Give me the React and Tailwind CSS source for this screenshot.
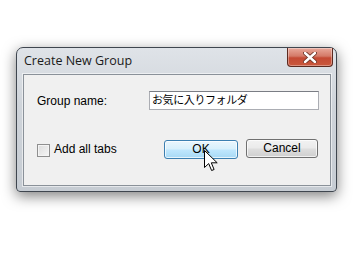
import React from "react";

const uiFont = { fontFamily: '"Liberation Sans", Arial, sans-serif' };

function CloseButton() {
  return (
    <div className="mr-[3px] flex h-[19px] w-[46px] items-center justify-center rounded-b-[4px] border border-t-0 border-[#5c2a20] bg-[linear-gradient(to_bottom,#e9a99b_0%,#d47a68_45%,#c44a34_55%,#c9583d_100%)] shadow-[inset_0_0_0_1px_rgba(255,255,255,0.35)]">
      <svg width="14" height="11" viewBox="0 0 14 11">
        <path
          d="M2 1 L12 10 M12 1 L2 10"
          stroke="#6b3326"
          strokeWidth="4.2"
          strokeLinecap="round"
        />
        <path
          d="M2 1 L12 10 M12 1 L2 10"
          stroke="#ffffff"
          strokeWidth="2.4"
          strokeLinecap="round"
        />
      </svg>
    </div>
  );
}

function Cursor() {
  return (
    <svg
      className="pointer-events-none absolute left-[40px] top-[14px]"
      width="15"
      height="22"
      viewBox="0 0 15 22"
    >
      <path
        d="M0.5 0.5 L0.5 17.5 L4.7 13.6 L7.6 20.5 L10.1 19.5 L7.3 12.8 L13.2 12.8 Z"
        fill="#ffffff"
        stroke="#000000"
        strokeWidth="1"
        strokeLinejoin="miter"
      />
    </svg>
  );
}

export default function App() {
  return (
    <div className="h-[265px] w-[355px] overflow-hidden bg-white pl-[16px] pt-[47px]" style={uiFont}>
      <div className="flex h-[145px] w-[321px] flex-col rounded-t-[7px] rounded-b-[4px] border border-[#3f464f] bg-[linear-gradient(to_bottom,#dfe3e8_0%,#cfd4da_40%,#c6ccd3_100%)] shadow-[0_4px_14px_rgba(0,0,0,0.5)]">
        <div className="flex h-[26px] shrink-0 items-start">
          <span
            className="pl-[7px] pt-[5px] text-[12.5px] leading-[16px] text-[#1a1a1a]"
            style={{ fontFamily: '"Open Sans", "Noto Sans", sans-serif' }}
          >
            Create New Group
          </span>
          <div className="ml-auto">
            <CloseButton />
          </div>
        </div>

        <div className="ml-[6px] mr-[5px] mb-[5px] flex flex-1 flex-col border border-[#8a9199] bg-[#f0f0f0] shadow-[0_0_0_1px_rgba(255,255,255,0.55)]">
          <div className="flex items-center pl-[13px] pr-[11px] pt-[16px]">
            <span className="text-[12px] text-black">Group name:</span>
            <div className="ml-auto flex h-[19px] w-[170px] items-center border border-[#abadb3] border-t-[#7a7d84] bg-white pl-[2px]">
              <span
                className="text-[11px] leading-none tracking-[-0.4px] text-black"
                style={{ fontFamily: '"Liberation Sans", "Noto Sans CJK JP", sans-serif' }}
              >
                お気に入りフォルダ
              </span>
            </div>
          </div>

          <div className="flex items-center pl-[13px] pr-[12px] pt-[26px]">
            <div className="mt-[4px] h-[13px] w-[13px] border border-[#8f8f8f] bg-[linear-gradient(135deg,#dcdcdc,#f6f6f6)] shadow-[inset_0_0_0_1px_#f4f4f4]" />
            <span className="ml-[4px] mt-[2px] text-[12px] text-black">Add all tabs</span>

            <div className="relative ml-auto">
              <button
                type="button"
                className="h-[19px] w-[74px] rounded-[3px] border border-[#3c7fb1] bg-[linear-gradient(to_bottom,#eaf6fd_0%,#d9f0fc_45%,#bee6fd_55%,#a7d9f5_100%)] text-[12px] leading-none text-black shadow-[inset_0_0_0_1px_rgba(255,255,255,0.7)]"
              >
                OK
              </button>
              <Cursor />
            </div>
            <button
              type="button"
              className="ml-[8px] h-[19px] w-[72px] rounded-[3px] border border-[#707070] bg-[linear-gradient(to_bottom,#f2f2f2_0%,#ebebeb_45%,#dddddd_55%,#cfcfcf_100%)] text-[12px] leading-none text-black shadow-[inset_0_0_0_1px_rgba(255,255,255,0.7)]"
            >
              Cancel
            </button>
          </div>
        </div>
      </div>
    </div>
  );
}
